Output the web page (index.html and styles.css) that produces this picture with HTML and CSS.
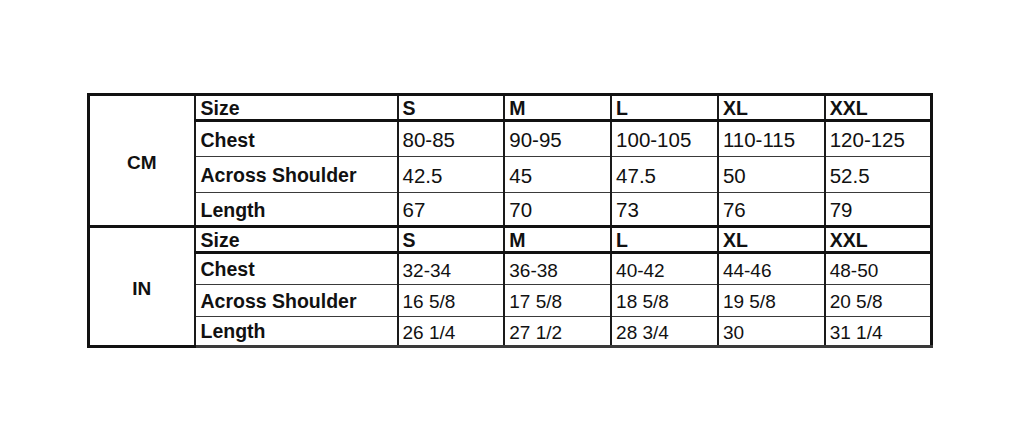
FILE: index.html
```html
<!DOCTYPE html>
<html>
<head>
<meta charset="utf-8">
<link rel="stylesheet" href="styles.css">
</head>
<body>
<table class="chart">
  <colgroup>
    <col class="c-unit"><col class="c-label"><col class="c-v"><col class="c-v"><col class="c-v"><col class="c-v"><col class="c-v">
  </colgroup>
  <tbody class="sec cm">
    <tr class="r-size">
      <td class="unit" rowspan="4">CM</td>
      <td class="lbl">Size</td><td class="hd">S</td><td class="hd">M</td><td class="hd">L</td><td class="hd">XL</td><td class="hd">XXL</td>
    </tr>
    <tr class="r-a">
      <td class="lbl">Chest</td><td>80-85</td><td>90-95</td><td>100-105</td><td>110-115</td><td>120-125</td>
    </tr>
    <tr class="r-a">
      <td class="lbl">Across Shoulder</td><td>42.5</td><td>45</td><td>47.5</td><td>50</td><td>52.5</td>
    </tr>
    <tr class="r-b">
      <td class="lbl">Length</td><td>67</td><td>70</td><td>73</td><td>76</td><td>79</td>
    </tr>
  </tbody>
  <tbody class="sec in">
    <tr class="r-size">
      <td class="unit" rowspan="4">IN</td>
      <td class="lbl">Size</td><td class="hd">S</td><td class="hd">M</td><td class="hd">L</td><td class="hd">XL</td><td class="hd">XXL</td>
    </tr>
    <tr class="r-c">
      <td class="lbl">Chest</td><td>32-34</td><td>36-38</td><td>40-42</td><td>44-46</td><td>48-50</td>
    </tr>
    <tr class="r-c">
      <td class="lbl">Across Shoulder</td><td>16 5/8</td><td>17 5/8</td><td>18 5/8</td><td>19 5/8</td><td>20 5/8</td>
    </tr>
    <tr class="r-d">
      <td class="lbl">Length</td><td>26 1/4</td><td>27 1/2</td><td>28 3/4</td><td>30</td><td>31 1/4</td>
    </tr>
  </tbody>
</table>
</body>
</html>
```
FILE: styles.css
```css
html, body {
  margin: 0;
  padding: 0;
  background: #ffffff;
}
body {
  padding: 93px 0 0 87px;
  font-family: "Liberation Sans", Arial, sans-serif;
  color: #111;
}
.chart {
  border-collapse: collapse;
  table-layout: fixed;
  width: 843px;
  border: 3px solid #111;
}
.c-unit { width: 106px; }
.c-label { width: 203px; }
.c-v { width: 106.8px; }
.chart td {
  box-sizing: border-box;
  padding: 0 0 0 4px;
  border-left: 2px solid #1a1a1a;
  border-right: 2px solid #1a1a1a;
  border-bottom: 1.5px solid #3a3a3a;
  font-size: 20.5px;
  line-height: 1;
  white-space: nowrap;
  vertical-align: middle;
  overflow: hidden;
}
.r-size td {
  height: 26px;
  vertical-align: bottom;
  padding-bottom: 1px;
  border-bottom: 3px solid #111;
}
.r-a td { height: 36px; padding-top: 3px; }
.r-b td { height: 34px; padding-top: 3px; border-bottom: 3px solid #111; }
.in td { font-size: 19px; }
.r-c td { height: 32px; padding-top: 2px; }
.r-d td { height: 30px; padding-top: 2px; }
.chart tr:last-child td { border-bottom-width: 3px; }
.chart td.lbl {
  font-weight: bold;
  font-size: 19.5px;
  padding-left: 5px;
}
.chart td.hd {
  font-weight: bold;
  font-size: 19.5px;
}
.chart td.unit {
  text-align: center;
  vertical-align: middle;
  font-weight: bold;
  font-size: 19px;
  padding: 4px 0 0 0;
  border-bottom: 3px solid #111;
}
```
